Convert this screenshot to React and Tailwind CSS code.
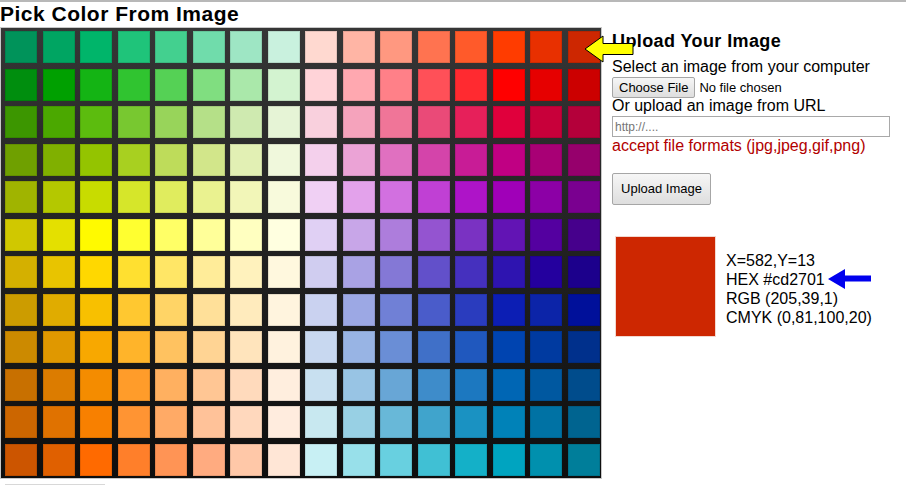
import React from "react";

const rows = [
  ["#00935a", "#00a562", "#00b56a", "#1fc47a", "#43d08f", "#70dcab", "#9ee6c4", "#c9f1de", "#ffd9d0", "#ffb5a5", "#ff9880", "#ff7350", "#ff5a2a", "#ff3c00", "#e83000", "#cd2701"],
  ["#008e0e", "#00a000", "#14b414", "#30c430", "#55d155", "#80de80", "#aae8aa", "#d3f3d0", "#ffd3d8", "#ffa8b0", "#ff8088", "#ff5058", "#ff2a30", "#ff0000", "#e60000", "#cc0000"],
  ["#3c9600", "#4ba800", "#5cbc0e", "#78c830", "#98d45a", "#b5e088", "#cfeab0", "#e6f4d6", "#f9d0dd", "#f5a3bc", "#f07598", "#ea4a78", "#e6205a", "#e0003c", "#c8003a", "#b4003a"],
  ["#6fa000", "#80b000", "#94c400", "#a8d020", "#bedc5a", "#d2e68a", "#e2f0b4", "#f0f8dc", "#f4d0ec", "#eba3d6", "#e070c0", "#d444aa", "#c81c96", "#c00083", "#a80075", "#96006c"],
  ["#a0b400", "#b4c800", "#c8dc00", "#d6e62a", "#e0ec5e", "#eaf290", "#f2f6b8", "#f8fadc", "#f0d0f4", "#e3a2eb", "#d270e0", "#c040d4", "#ae14c8", "#a000b8", "#8c00a6", "#7a0090"],
  ["#d0c800", "#e4e000", "#fffa00", "#ffff30", "#ffff66", "#ffff99", "#ffffc0", "#ffffe0", "#e0d0f4", "#c8a6e8", "#ad7ddc", "#9454d0", "#7a32c2", "#6214b4", "#5400a0", "#46008c"],
  ["#d4b000", "#e8c400", "#ffd800", "#ffe030", "#ffe666", "#ffec99", "#fff2bd", "#fff8de", "#d0cdf0", "#a9a2e4", "#8478d6", "#6250ca", "#4530be", "#2e14b0", "#24009e", "#1c008c"],
  ["#cc9c00", "#e0ac00", "#f8c000", "#ffc830", "#ffd466", "#ffe099", "#ffebbd", "#fff4de", "#cad2f0", "#9ca8e4", "#7080d6", "#4a5cca", "#2a3cbe", "#0c1eb4", "#0c24a8", "#00109a"],
  ["#cc8a00", "#e09800", "#f8a800", "#ffb42a", "#ffc260", "#ffd494", "#ffe4bc", "#fff2de", "#c8d8f0", "#98b4e4", "#6a8ed6", "#4070c8", "#2058be", "#0044b0", "#003aa0", "#00308c"],
  ["#c87000", "#dc7c00", "#f48c00", "#ff9c2a", "#ffb060", "#ffc694", "#ffdabc", "#ffeede", "#c8e0f0", "#98c4e4", "#68a6d6", "#3e8cca", "#1c78c0", "#0066b4", "#0058a0", "#004c8c"],
  ["#cc6600", "#e07200", "#f88000", "#ff9433", "#ffaa66", "#ffc299", "#ffd8bd", "#ffecde", "#c8e8f0", "#98d0e4", "#68b8d8", "#40a4cc", "#1a92c2", "#0082b8", "#0072a4", "#006490"],
  ["#cc5500", "#e06000", "#ff6a00", "#ff7f2a", "#ff9455", "#ffab80", "#ffc8a8", "#ffe6d6", "#c8f0f4", "#98e0ea", "#68d0e0", "#40c0d4", "#14b0c8", "#00a4c0", "#0090ae", "#007e9a"],
];

const ColorChart = () => (
  <div className="border border-[#c8c8c8] w-[602px] h-[452px]">
    <div className="grid grid-cols-[repeat(16,37.5px)] grid-rows-[repeat(12,37.5px)] bg-linear-to-b from-[#363636] to-[#0e0e0e] w-[600px] h-[450px] pl-[1px]">
      {rows.flat().map((c, i) => (
        <div key={i} className="pt-[3px] pl-[3px]">
          <div
            className="w-[32px] h-[32px] border border-black/10"
            style={{ backgroundColor: c }}
          />
        </div>
      ))}
    </div>
  </div>
);

const App = () => {
  return (
    <div className="relative w-[906px] h-[487px] overflow-hidden bg-white border-t-2 border-[#b8b8b8] font-['Liberation_Sans',Arial,sans-serif] text-black">
      <div className="flex">
        <section className="flex flex-col">
          <h1 className="text-[21px] font-bold leading-[24px] h-[25px] tracking-[0.5px]">
            Pick Color From Image
          </h1>
          <ColorChart />
          <div className="ml-[5px] mt-[5px] w-[100px] border-t border-[#d8d8d8]" />
        </section>
        <section className="ml-[10px] pt-[29px] flex flex-col">
          <h2 className="text-[18px] font-bold leading-[21px] tracking-[0.4px]">Upload Your Image</h2>
          <p className="text-[16px] leading-[18px] mt-[6px]">
            Select an image from your computer
          </p>
          <div className="flex items-center mt-[1px]">
            <button className="h-[21px] px-[6px] text-[13px] border border-[#a6a6a6] rounded-[2px] bg-linear-to-b from-[#f6f6f6] to-[#dedede]">
              Choose File
            </button>
            <span className="text-[13px] ml-[4px]">No file chosen</span>
          </div>
          <p className="text-[16px] leading-[18px] mt-[-1px]">Or upload an image from URL</p>
          <input
            className="w-[278px] h-[21px] mt-[1px] border border-[#a9a9a9] px-[2px] text-[12px] placeholder:text-[#757575] outline-none"
            placeholder="http://...."
          />
          <p className="text-[16px] leading-[18px] text-[#b20000]">
            accept file formats (jpg,jpeg,gif,png)
          </p>
          <button className="self-start mt-[18px] w-[99px] h-[32px] text-[13px] border border-[#a6a6a6] rounded-[2px] bg-linear-to-b from-[#f6f6f6] to-[#dedede]">
            Upload Image
          </button>
          <div className="flex items-center mt-[31px] ml-[3px]">
            <div className="w-[101px] h-[101px] bg-[#cd2701] border border-[#f2d8d0]" />
            <div className="ml-[10px] text-[16px] leading-[19px] pt-[4px]">
              <div>X=582,Y=13</div>
              <div>HEX #cd2701</div>
              <div>RGB (205,39,1)</div>
              <div>CMYK (0,81,100,20)</div>
            </div>
          </div>
        </section>
      </div>

      <svg className="absolute left-[584px] top-[33px]" width="52" height="28" viewBox="0 0 52 28">
        <polygon
          points="1,14 19,1 19,8.5 49,8.5 49,19.5 19,19.5 19,27"
          fill="#ffff00"
          stroke="#000"
          strokeWidth="1"
        />
      </svg>
      <svg className="absolute left-[827px] top-[266px]" width="46" height="22" viewBox="0 0 46 22">
        <polygon points="1,11 18,1 18,7.5 44,7.5 44,13.5 18,13.5 18,21" fill="#0000ee" />
      </svg>
    </div>
  );
};

export default App;
